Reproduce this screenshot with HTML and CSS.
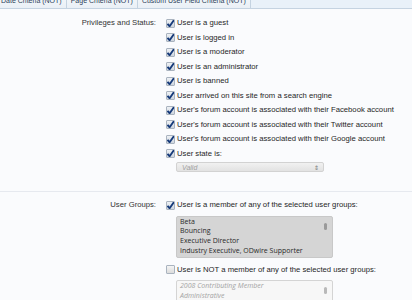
FILE: index.html
```html
<!DOCTYPE html>
<html lang="en">
<head>
  <meta charset="UTF-8" />
  <title>User Criteria</title>
  <link rel="stylesheet" href="styles.css">
</head>
<body>

  <ul class="tabs">
    <li>Date Criteria (NOT)</li>
    <li>Page Criteria (NOT)</li>
    <li>Custom User Field Criteria (NOT)</li>
  </ul>

  <div class="section">
    <div class="row">
      <div class="label">Privileges and Status:</div>
      <div class="options">
        <label class="check on">User is a guest</label>
        <label class="check on">User is logged in</label>
        <label class="check on">User is a moderator</label>
        <label class="check on">User is an administrator</label>
        <label class="check on">User is banned</label>
        <label class="check on">User arrived on this site from a search engine</label>
        <label class="check on">User's forum account is associated with their Facebook account</label>
        <label class="check on">User's forum account is associated with their Twitter account</label>
        <label class="check on">User's forum account is associated with their Google account</label>
        <label class="check on">User state is:</label>
        <div class="select">
          <span>Valid</span>
          <span class="arrows">&#8661;</span>
        </div>
      </div>
    </div>
  </div>

  <div class="section">
    <div class="row">
      <div class="label">User Groups:</div>
      <div class="options">
        <label class="check on">User is a member of any of the selected user groups:</label>
        <div class="listbox">
          <ul>
            <li>Beta</li>
            <li>Bouncing</li>
            <li>Executive Director</li>
            <li>Industry Executive, ODwire Supporter</li>
          </ul>
          <div class="track"><div class="thumb"></div></div>
        </div>
        <label class="check">User is NOT a member of any of the selected user groups:</label>
        <div class="listbox disabled">
          <ul>
            <li>2008 Contributing Member</li>
            <li>Administrative</li>
            <li>Beta</li>
            <li>Bouncing</li>
          </ul>
          <div class="track"><div class="thumb"></div></div>
        </div>
      </div>
    </div>
  </div>

</body>
</html>
```

FILE: styles.css
```css
body {
  margin: 0;
  background: #fafbfd;
  font-family: "Liberation Sans", Arial, sans-serif;
  font-size: 7.7px;
  color: #222;
  overflow: hidden;
}

.tabs {
  list-style: none;
  margin: -6px 0 0 0;
  padding: 0;
  display: flex;
  height: 14px;
  background: #e9f1f9;
  border-bottom: 1px solid #c5d3e1;
  font-size: 7px;
}

.tabs li {
  padding: 1px 4px 0;
  line-height: 12px;
  color: #2c3e58;
  background: linear-gradient(#f5f8fb, #eaf0f6);
  border-right: 1px solid #c5d3e1;
}

.tabs li:first-child {
  margin-left: -3px;
}

.section {
  padding: 7px 0 19px;
}

.section + .section {
  border-top: 1px solid #e6e9ef;
  padding-top: 6px;
}

.row {
  display: grid;
  grid-template-columns: 156px 1fr;
  column-gap: 10px;
}

.label {
  text-align: right;
  line-height: 14.5px;
  color: #333;
}

.options {
  display: flex;
  flex-direction: column;
  align-items: flex-start;
}

.check {
  display: flex;
  align-items: center;
  gap: 2px;
  line-height: 14.5px;
  color: #1f1f1f;
}

.check::before {
  content: "";
  width: 7px;
  height: 7px;
  border: 1px solid #a9b3bf;
  border-radius: 1px;
  background: linear-gradient(#f4f4f4, #dcdcdc);
  flex: none;
}

.check.on::before {
  background: url("data:image/svg+xml;utf8,<svg xmlns='http://www.w3.org/2000/svg' viewBox='0 0 9 9'><path d='M1.5 4.8 L3.6 7.2 L8.2 0.8' fill='none' stroke='%23163a7a' stroke-width='1.9'/></svg>") center/9px 9px no-repeat, linear-gradient(#eef1f5, #cfd6de);
}

.select {
  margin: 1px 0 0 10px;
  width: 137px;
  height: 8px;
  padding: 0 4px 0 5px;
  display: flex;
  justify-content: space-between;
  align-items: center;
  border: 1px solid #d2d2d2;
  border-radius: 2px;
  background: linear-gradient(#f1f1f1, #e2e2e2);
  font-size: 7px;
  font-style: italic;
  color: #a0a0a0;
}

.select .arrows {
  font-style: normal;
  font-size: 6px;
  color: #777;
}

.listbox {
  margin: 3px 0 5px 10px;
  width: 155px;
  height: 40px;
  display: flex;
  border: 1px solid #c8c8c8;
  border-radius: 2px;
  background: #d5d5d5;
  overflow: hidden;
}

.listbox ul {
  list-style: none;
  margin: 0;
  padding: 0 0 0 3px;
  flex: 1;
  font-family: "Open Sans", "Liberation Sans", sans-serif;
  font-size: 7px;
  line-height: 9.8px;
  color: #2a2a2a;
}

.listbox .track {
  width: 6px;
  padding: 6px 2px 0 0;
}

.listbox .thumb {
  width: 3px;
  height: 7px;
  border-radius: 2px;
  background: #9a9a9a;
}

.listbox.disabled {
  background: #f7f7f7;
  border-color: #d4d4d4;
}

.listbox.disabled ul {
  color: #a3a3a3;
  font-style: italic;
}

.listbox.disabled .thumb {
  background: #b9b9b9;
}
```
